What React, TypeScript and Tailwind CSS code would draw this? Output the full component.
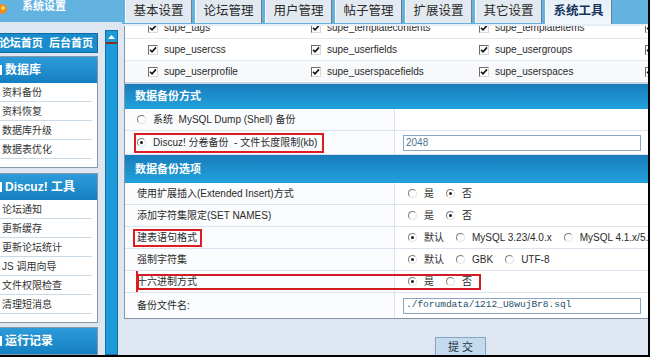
import React from "react";

const tabs = ["基本设置", "论坛管理", "用户管理", "帖子管理", "扩展设置", "其它设置"];

const panels = [
  { title: "数据库", items: ["资料备份", "资料恢复", "数据库升级", "数据表优化"] },
  {
    title: "Discuz! 工具",
    items: ["论坛通知", "更新缓存", "更新论坛统计", "JS 调用向导", "文件权限检查", "清理短消息"],
  },
];

const tableRows = [
  ["supe_tags", "supe_templatecontents", "supe_templateitems", ""],
  ["supe_usercss", "supe_userfields", "supe_usergroups", ""],
  ["supe_userprofile", "supe_userspacefields", "supe_userspaces", ""],
];

function Radio({ on }: { on?: boolean }) {
  return (
    <span className="inline-flex h-[9px] w-[9px] shrink-0 items-center justify-center rounded-full border border-t-[#7d7d7d] border-l-[#7d7d7d] border-r-[#e2e2e2] border-b-[#e2e2e2] bg-white">
      {on && <span className="h-[3px] w-[3px] rounded-full bg-[#1a1a1a]" />}
    </span>
  );
}

function Check() {
  return (
    <span className="inline-flex h-[10px] w-[10px] shrink-0 items-center justify-center border border-t-[#6d6d6d] border-l-[#6d6d6d] border-r-[#d8d8d8] border-b-[#d8d8d8] bg-white">
      <svg width="8" height="8" viewBox="0 0 8 8">
        <path d="M1 3.8 L3 5.8 L7 1.4" fill="none" stroke="#111" strokeWidth="1.6" />
      </svg>
    </span>
  );
}

function Options({ items, on }: { items: string[]; on: number }) {
  return (
    <div className="flex items-center gap-[12px]">
      {items.map((label, i) => (
        <span key={label} className="flex items-center gap-[7px]">
          <Radio on={i === on} />
          <span>{label}</span>
        </span>
      ))}
    </div>
  );
}

function SectionHead({ title, h }: { title: string; h: string }) {
  return (
    <div className={`flex ${h} items-center bg-gradient-to-b from-[#1a7cbc] to-[#21a2de] pl-[10px] text-[11px] font-bold text-white`}>
      {title}
    </div>
  );
}

function FormRow({ label, children, h = "h-[22px]" }: { label: React.ReactNode; children: React.ReactNode; h?: string }) {
  return (
    <div className={`flex ${h} border-b border-[#dbe4ee]`}>
      <div className="flex w-[270px] items-center border-r border-[#dbe4ee] bg-[#fbfcfd] pl-[12px]">{label}</div>
      <div className="flex flex-1 items-center pl-[13px]">{children}</div>
    </div>
  );
}

export default function App() {
  return (
    <div className="relative flex h-[357px] w-[650px] flex-col overflow-hidden border-r-2 border-b-2 border-black bg-[#dde6f1] font-['Liberation_Sans','Noto_Sans_CJK_SC',sans-serif] text-[10px] text-[#2a2a2a]">
      {/* top bar */}
      <div className="flex h-[24px] shrink-0">
        <div className="flex h-[22px] w-[122px] items-start bg-[#62b3df]">
          <svg width="10" height="16" viewBox="0 0 10 16" className="shrink-0">
            <circle cx="2" cy="9" r="5" fill="#f08a24" />
            <circle cx="3" cy="8" r="2" fill="#ffd64a" />
          </svg>
          <span className="-mt-[2px] ml-[12px] text-[11px] font-bold text-white">系统设置</span>
        </div>
        <div className="flex flex-1 items-stretch gap-[3px] bg-[#62b3df] pl-[3px]">
          {tabs.map((t) => (
            <div
              key={t}
              className="flex h-[23px] w-[67px] items-center justify-center border-x border-l-white border-r-[#6d7d8d] bg-[#e3e9f0] text-[12.5px] text-[#2b2b2b]"
            >
              {t}
            </div>
          ))}
          <div className="flex h-[24px] w-[67px] items-start justify-center border-x border-l-white border-r-[#6d7d8d] bg-gradient-to-b from-[#e6eff8] to-[#f2f7fb] pt-[2px] text-[12.5px] font-bold text-[#14345e]">
            系统工具
          </div>
        </div>
      </div>

      {/* body */}
      <div className="flex min-h-0 flex-1">
        {/* sidebar */}
        <aside className="flex w-[98px] shrink-0 flex-col pt-[9px]">
          <div className="flex h-[27px] items-center justify-end border border-l-0 border-[#0f6aa3] bg-[#1a8ccc] pr-[4px] text-[11px] font-bold whitespace-nowrap text-white">
            论坛首页&nbsp;&nbsp;后台首页
          </div>
          {panels.map((p, idx) => (
            <div key={p.title} className={`${idx === 0 ? "mt-[3px]" : "mt-[5px]"} border border-l-0 border-[#8797aa] bg-white`}>
              <div className="flex h-[26px] items-center bg-gradient-to-b from-[#2c9bd9] to-[#1580c1] text-[12px] font-bold whitespace-nowrap text-white">
                <span className="mr-[3px] h-[10px] w-[2px] bg-white" />
                {p.title}
              </div>
              <ul className="pb-[8px]">
                {p.items.map((i) => (
                  <li key={i} className="mr-[5px] flex h-[19px] items-center border-b border-[#cbd9e7] pl-[2px] text-[10px] whitespace-nowrap text-[#333]">
                    {i}
                  </li>
                ))}
              </ul>
            </div>
          ))}
          <div className="mt-[4px] border border-l-0 border-[#8797aa]">
            <div className="flex h-[26px] items-center bg-gradient-to-b from-[#2c9bd9] to-[#1580c1] text-[12px] font-bold text-white">
              <span className="mr-[3px] h-[10px] w-[2px] bg-white" />
              运行记录
            </div>
          </div>
        </aside>

        {/* scrollbar */}
        <div className="mt-[6px] ml-[7px] w-[13px] shrink-0 border border-[#1570a8] bg-[#1d9ad8]">
          <div className="flex h-[13px] items-center justify-center border-b-2 border-[#8a2c1c]">
            <svg width="7" height="4" viewBox="0 0 7 4">
              <path d="M0 4 L3.5 0 L7 4 Z" fill="#fff" />
            </svg>
          </div>
        </div>

        {/* main */}
        <main className="ml-[6px] flex min-w-0 flex-1 flex-col overflow-hidden">
          <div className="h-[2px] shrink-0 bg-[#e6eef6]" />
          <div className="w-[540px] shrink-0 overflow-hidden border-b border-l border-[#8797a9] bg-white">
            {/* table list rows */}
            {tableRows.map((r, ri) => (
              <div
                key={ri}
                className={`grid grid-cols-[15px_163px_168px_166px_166px] items-center border-b border-[#dfe7ef] ${ri === 0 ? "-mt-[9px] h-[22px]" : ri === 2 ? "h-[23px] border-b-2 border-b-[#c9d5e2] bg-[#f7f9fb]" : "h-[22px]"}`}
              >
                <span />
                {r.map((c, ci) => (
                  <span key={ci} className="flex items-center gap-[6px] pl-[8px] text-[10px] whitespace-nowrap">
                    <Check />
                    {c}
                  </span>
                ))}
              </div>
            ))}

            <SectionHead title="数据备份方式" h="h-[25px]" />
            <FormRow
              label={
                <span className="flex items-center gap-[7px] whitespace-nowrap">
                  <Radio />
                  系统&nbsp; MySQL Dump (Shell) 备份
                </span>
              }
            >
              <span />
            </FormRow>
            <FormRow
              h="h-[24px]"
              label={
                <span className="flex items-center gap-[7px] whitespace-nowrap">
                  <Radio on />
                  Discuz! 分卷备份&nbsp; - 文件长度限制(kb)
                </span>
              }
            >
              <div className="-ml-[5px] flex h-[16px] w-[238px] items-center border border-[#8aa6c2] bg-white pl-[2px] text-[10px] text-[#4b7896]">
                2048
              </div>
            </FormRow>

            <SectionHead title="数据备份选项" h="h-[28px]" />
            <FormRow label="使用扩展插入(Extended Insert)方式">
              <Options items={["是", "否"]} on={1} />
            </FormRow>
            <FormRow label="添加字符集限定(SET NAMES)">
              <Options items={["是", "否"]} on={1} />
            </FormRow>
            <FormRow label="建表语句格式">
              <Options items={["默认", "MySQL 3.23/4.0.x", "MySQL 4.1.x/5.x"]} on={0} />
            </FormRow>
            <FormRow label="强制字符集">
              <Options items={["默认", "GBK", "UTF-8"]} on={0} />
            </FormRow>
            <FormRow label="十六进制方式">
              <Options items={["是", "否"]} on={0} />
            </FormRow>
            <FormRow label="备份文件名:" h="h-[25px] border-b-0">
              <div className="-ml-[5px] flex h-[16px] w-[238px] items-center border border-[#8aa6c2] bg-white pl-[2px] font-['Liberation_Mono',monospace] text-[9.5px] text-[#254f6e]">
                ./forumdata/1212_U8wujBr8.sql
              </div>
            </FormRow>
          </div>

          <div className="mt-[18px] pl-[311px]">
            <button className="h-[20px] w-[51px] border border-[#86a4c0] bg-[#c3daef] text-[11px] text-[#1f2f40]">
              提 交
            </button>
          </div>
        </main>
      </div>

      {/* red annotation boxes */}
      <div className="pointer-events-none absolute top-[133px] left-[134px] h-[20px] w-[190px] border-2 border-[#e01b22]" />
      <div className="pointer-events-none absolute top-[229px] left-[133px] h-[18px] w-[69px] border-2 border-[#e01b22]" />
      <div className="pointer-events-none absolute top-[274px] left-[137px] h-[16px] w-[344px] border-2 border-[#d21c24]" />
      <div className="pointer-events-none absolute top-[271px] left-[136px] h-[21px] w-[2px] bg-[#e01b22]" />
    </div>
  );
}
